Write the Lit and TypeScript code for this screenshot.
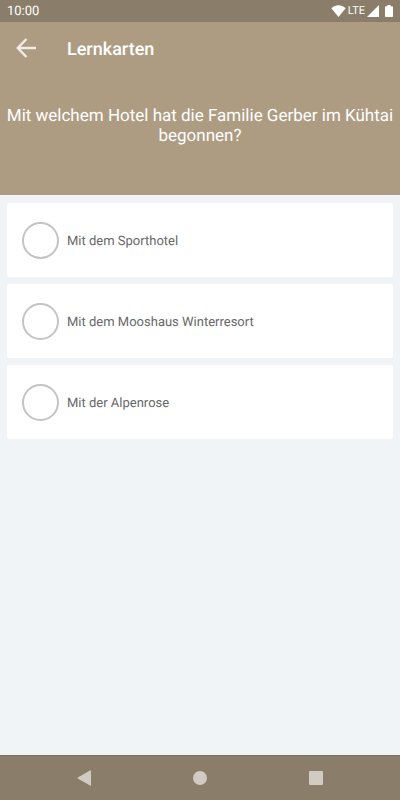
import { LitElement, html, css } from "lit";
import { customElement, state } from "lit/decorators.js";

@customElement("status-bar")
class StatusBar extends LitElement {
  static styles = css`
    :host {
      display: flex;
      align-items: center;
      justify-content: space-between;
      height: 22px;
      padding: 0 7px;
      background: #8a7d6a;
      color: #fff;
    }
    .time {
      padding-top: 2px;
      font-size: 13px;
      line-height: 20px;
    }
    .icons {
      display: flex;
      align-items: center;
      gap: 2px;
    }
    .network {
      font-size: 11px;
      line-height: 20px;
    }
    .battery {
      margin-left: 4px;
    }
    svg {
      display: block;
      fill: #fff;
    }
  `;
  render() {
    return html`
      <span class="time">10:00</span>
      <div class="icons">
        <svg width="15" height="12" viewBox="0 0 15 12" aria-hidden="true">
          <path d="M7.5 12 L0.3 3.2 C4.4 -0.9 10.6 -0.9 14.7 3.2 Z" />
        </svg>
        <span class="network">LTE</span>
        <svg width="12" height="12" viewBox="0 0 12 12" aria-hidden="true">
          <path d="M12 0 V12 H0 Z" />
        </svg>
        <svg class="battery" width="8" height="12" viewBox="0 0 8 12" aria-hidden="true">
          <path d="M2.4 0 H5.6 V1.2 H7.2 Q8 1.2 8 2 V11.2 Q8 12 7.2 12 H0.8 Q0 12 0 11.2 V2 Q0 1.2 0.8 1.2 H2.4 Z" />
        </svg>
      </div>
    `;
  }
}

@customElement("question-header")
class QuestionHeader extends LitElement {
  static properties = { question: { type: String } };
  declare question: string;
  static styles = css`
    :host {
      display: block;
      box-sizing: border-box;
      min-height: 173px;
      background: #ad9c82;
      color: #fff;
    }
    .bar {
      display: flex;
      align-items: center;
      gap: 27px;
      height: 52px;
      padding: 0 12px;
    }
    .back {
      display: block;
      width: 28px;
      height: 32px;
      padding: 0;
      border: 0;
      background: none;
      cursor: pointer;
    }
    .arrow {
      display: block;
      margin: 0 auto;
      fill: none;
      stroke: #f0ece6;
      stroke-width: 2.4;
    }
    .title {
      margin: 0;
      padding-top: 3px;
      font-size: 18px;
      line-height: 24px;
      font-weight: 500;
    }
    .question {
      margin: 0;
      padding: 32px 6px 48px;
      text-align: center;
      font-size: 17px;
      line-height: 20px;
    }
  `;
  render() {
    return html`
      <div class="bar">
        <button class="back" type="button" aria-label="Zurück">
          <svg class="arrow" width="20" height="20" viewBox="0 0 20 20" aria-hidden="true">
            <path d="M20 10 H2 M10.5 1 L1.7 10 L10.5 19" />
          </svg>
        </button>
        <h1 class="title">Lernkarten</h1>
      </div>
      <p class="question">${this.question}</p>
    `;
  }
}

@customElement("answer-list")
class AnswerList extends LitElement {
  static properties = { answers: { type: Array } };
  declare answers: string[];
  static styles = css`
    .list {
      display: grid;
      gap: 7px;
      margin: 0;
      padding: 8px 7px;
      border: 0;
    }
    .card {
      display: flex;
      align-items: center;
      gap: 8px;
      box-sizing: border-box;
      min-height: 74px;
      padding: 16px 15px;
      border-radius: 2px;
      background: #fff;
      color: #686868;
      font-size: 13px;
      line-height: 20px;
      cursor: pointer;
    }
    .answer {
      padding-top: 3px;
    }
    .radio {
      appearance: none;
      flex: none;
      box-sizing: border-box;
      width: 37px;
      height: 37px;
      margin: 0;
      border: 2px solid #c4c4c4;
      border-radius: 50%;
      cursor: pointer;
    }
    .radio:checked {
      border-color: #ad9c82;
      background: radial-gradient(#ad9c82 50%, transparent 54%);
    }
  `;
  render() {
    return html`
      <fieldset class="list" aria-label="Antworten">
        ${this.answers.map(
          (answer) => html`
            <label class="card">
              <input class="radio" type="radio" name="answer" .value=${answer} />
              <span class="answer">${answer}</span>
            </label>
          `
        )}
      </fieldset>
    `;
  }
}

@customElement("navigation-bar")
class NavigationBar extends LitElement {
  static styles = css`
    .nav {
      display: grid;
      grid-template-columns: repeat(3, 29%);
      justify-content: center;
      box-sizing: border-box;
      height: 45px;
      border-top: 1px solid #7f745f;
      background: #8a7d6a;
    }
    .key {
      display: grid;
      place-items: center;
      padding: 0;
      border: 0;
      background: none;
      cursor: pointer;
    }
    svg {
      display: block;
      fill: #d2cbc4;
    }
  `;
  render() {
    return html`
      <nav class="nav" aria-label="System">
        <button class="key" type="button" aria-label="Zurück">
          <svg width="14" height="16" viewBox="0 0 14 16" aria-hidden="true">
            <path d="M13 0.6 Q14 0 14 1 V15 Q14 16 13 15.4 L0.8 8.6 Q0 8 0.8 7.4 Z" />
          </svg>
        </button>
        <button class="key" type="button" aria-label="Startbildschirm">
          <svg width="14" height="14" viewBox="0 0 14 14" aria-hidden="true">
            <circle cx="7" cy="7" r="7" />
          </svg>
        </button>
        <button class="key" type="button" aria-label="Übersicht">
          <svg width="14" height="14" viewBox="0 0 14 14" aria-hidden="true">
            <rect width="14" height="14" rx="1" />
          </svg>
        </button>
      </nav>
    `;
  }
}

@customElement("app-root")
class AppRoot extends LitElement {
  @state() private question = "Mit welchem Hotel hat die Familie Gerber im Kühtai begonnen?";
  @state() private answers = [
    "Mit dem Sporthotel",
    "Mit dem Mooshaus Winterresort",
    "Mit der Alpenrose",
  ];
  static styles = css`
    :host {
      display: flex;
      flex-direction: column;
      min-height: 100vh;
      background: #f0f4f7;
      font-family: Roboto, "Liberation Sans", sans-serif;
      text-rendering: geometricPrecision;
    }
    .content {
      flex: 1;
    }
  `;
  render() {
    return html`
      <status-bar></status-bar>
      <question-header .question=${this.question}></question-header>
      <main class="content">
        <answer-list .answers=${this.answers}></answer-list>
      </main>
      <navigation-bar></navigation-bar>
    `;
  }
}
